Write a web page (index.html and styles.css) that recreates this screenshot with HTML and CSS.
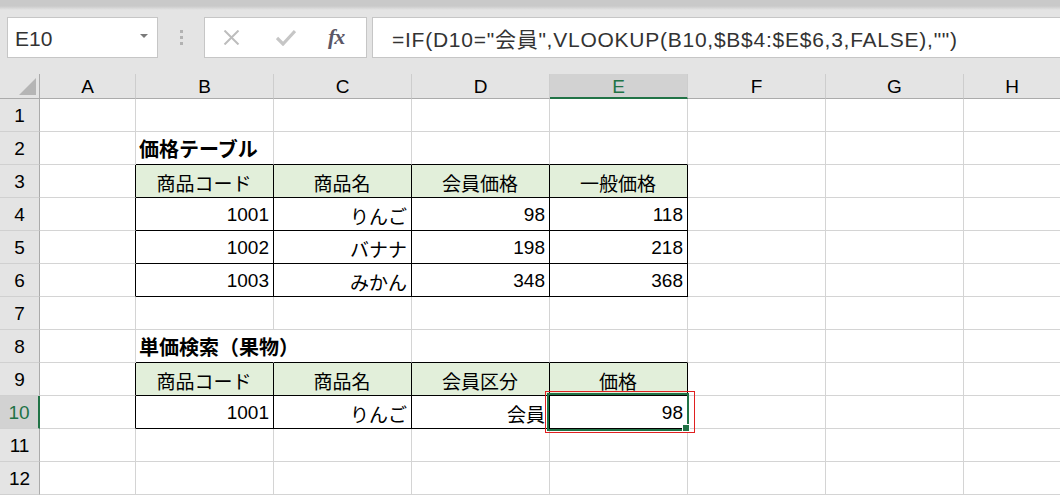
FILE: index.html
```html
<!DOCTYPE html>
<html lang="ja">
<head>
<meta charset="utf-8">
<title>Excel</title>
<link rel="stylesheet" href="styles.css">
</head>
<body>
<div class="toolbar">
  <div class="namebox"><span>E10</span><span class="caret"></span></div>
  <div class="grip"><i></i><i></i><i></i></div>
  <div class="fbtns">
    <svg class="ic-x" width="17" height="15" viewBox="0 0 17 15"><path d="M1.5 0.5 L15.5 14.5 M15.5 0.5 L1.5 14.5" stroke="#bdbdbd" stroke-width="2" fill="none"/></svg>
    <svg class="ic-ok" width="20" height="17" viewBox="0 0 20 17"><path d="M1 9 L7 15 L19 2" stroke="#c6c6c6" stroke-width="3.2" fill="none"/></svg>
    <span class="fx">fx</span>
  </div>
  <div class="fbox">=IF(D10="会員",VLOOKUP(B10,$B$4:$E$6,3,FALSE),"")</div>
</div>
<div class="sheet">
  <div class="corner"><span class="tri"></span></div>
  <div class="ch">A</div><div class="ch">B</div><div class="ch">C</div><div class="ch">D</div><div class="ch sel">E</div><div class="ch">F</div><div class="ch">G</div><div class="ch">H</div>

  <div class="rh">1</div>
  <div class="c"></div><div class="c"></div><div class="c"></div><div class="c"></div><div class="c"></div><div class="c"></div><div class="c"></div><div class="c"></div>

  <div class="rh">2</div>
  <div class="c"></div><div class="c bb title">価格テーブル</div><div class="c bb"></div><div class="c bb"></div><div class="c bb"></div><div class="c"></div><div class="c"></div><div class="c"></div>

  <div class="rh">3</div>
  <div class="c br"></div><div class="c th">商品コード</div><div class="c th">商品名</div><div class="c th">会員価格</div><div class="c th">一般価格</div><div class="c"></div><div class="c"></div><div class="c"></div>

  <div class="rh">4</div>
  <div class="c br"></div><div class="c td">1001</div><div class="c td">りんご</div><div class="c td">98</div><div class="c td">118</div><div class="c"></div><div class="c"></div><div class="c"></div>

  <div class="rh">5</div>
  <div class="c br"></div><div class="c td">1002</div><div class="c td">バナナ</div><div class="c td">198</div><div class="c td">218</div><div class="c"></div><div class="c"></div><div class="c"></div>

  <div class="rh">6</div>
  <div class="c br"></div><div class="c td">1003</div><div class="c td">みかん</div><div class="c td">348</div><div class="c td">368</div><div class="c"></div><div class="c"></div><div class="c"></div>

  <div class="rh">7</div>
  <div class="c"></div><div class="c"></div><div class="c"></div><div class="c"></div><div class="c"></div><div class="c"></div><div class="c"></div><div class="c"></div>

  <div class="rh">8</div>
  <div class="c"></div><div class="c bb nbr title">単価検索（果物）</div><div class="c bb"></div><div class="c bb"></div><div class="c bb"></div><div class="c"></div><div class="c"></div><div class="c"></div>

  <div class="rh">9</div>
  <div class="c br"></div><div class="c th">商品コード</div><div class="c th">商品名</div><div class="c th">会員区分</div><div class="c th">価格</div><div class="c"></div><div class="c"></div><div class="c"></div>

  <div class="rh sel">10</div>
  <div class="c br"></div><div class="c td">1001</div><div class="c td">りんご</div><div class="c td">会員</div><div class="c td active">98<span class="selbox"></span><span class="handle"></span><span class="mark"></span></div><div class="c"></div><div class="c"></div><div class="c"></div>

  <div class="rh">11</div>
  <div class="c"></div><div class="c"></div><div class="c"></div><div class="c"></div><div class="c"></div><div class="c"></div><div class="c"></div><div class="c"></div>

  <div class="rh">12</div>
  <div class="c"></div><div class="c"></div><div class="c"></div><div class="c"></div><div class="c"></div><div class="c"></div><div class="c"></div><div class="c"></div>
</div>
</body>
</html>
```

FILE: styles.css
```css
* { box-sizing: border-box; margin: 0; padding: 0; }
html, body { width: 1060px; height: 495px; overflow: hidden; }
body {
  background: #e4e4e4;
  font-family: "Liberation Sans", "Noto Sans CJK JP", sans-serif;
  color: #000;
}

/* ---------- toolbar ---------- */
.toolbar {
  height: 74px;
  display: flex;
  align-items: flex-start;
  padding: 17px 0 0 7px;
  background: linear-gradient(#c9c9c9 0, #c9c9c9 6px, #e4e4e4 10px);
}
.namebox {
  width: 151px;
  height: 41px;
  flex: none;
  background: #fff;
  border: 1px solid #c6c6c6;
  display: flex;
  align-items: center;
  justify-content: space-between;
  padding: 2px 9px 0 7px;
  font-size: 21px;
  color: #333;
}
.caret {
  width: 0;
  height: 0;
  border-left: 4px solid transparent;
  border-right: 4px solid transparent;
  border-top: 4px solid #7a7a7a;
  margin-bottom: 5px;
}
.grip {
  width: 46px;
  height: 41px;
  flex: none;
  display: flex;
  flex-direction: column;
  align-items: center;
  justify-content: center;
  gap: 3px;
}
.grip i { display: block; width: 3px; height: 3px; background: #b2b2b2; }
.fbtns {
  width: 163px;
  height: 41px;
  flex: none;
  background: #fff;
  border: 1px solid #c6c6c6;
  display: flex;
  align-items: center;
}
.ic-x { margin-left: 18px; }
.ic-ok { margin-left: 36px; margin-top: -1px; }
.fx {
  margin-left: 32px;
  font-family: "Liberation Serif", serif;
  font-style: italic;
  font-weight: bold;
  font-size: 22px;
  letter-spacing: -1px;
  color: #5c5767;
  margin-top: -2px;
}
.fbox {
  flex: 1;
  height: 41px;
  margin-left: 5px;
  margin-right: -4px;
  background: #fff;
  border: 1px solid #c6c6c6;
  display: flex;
  align-items: center;
  padding: 1px 0 0 19px;
  font-size: 21px;
  letter-spacing: 0.75px;
  color: #333;
  white-space: nowrap;
}

/* ---------- sheet ---------- */
.sheet {
  display: grid;
  grid-template-columns: 40px 96px repeat(6, 138px) 97px;
  grid-template-rows: 25px repeat(12, 33px);
  background: #fff;
}
.corner {
  background: #e4e4e4;
  border-right: 1px solid #ababab;
  border-bottom: 1px solid #ababab;
  display: flex;
  align-items: flex-end;
  justify-content: flex-end;
  padding: 0 3px 3px 0;
}
.tri {
  width: 0;
  height: 0;
  border-left: 17px solid transparent;
  border-bottom: 17px solid #b5b5b5;
}
.ch {
  background: #e4e4e4;
  border-right: 1px solid #cdcdcd;
  border-bottom: 1px solid #ababab;
  display: flex;
  align-items: center;
  justify-content: center;
  padding-top: 2px;
  font-size: 19px;
}
.ch.sel {
  background: #d2d2d2;
  color: #217346;
  border-bottom: 2px solid #217346;
}
.rh {
  background: #e4e4e4;
  border-right: 1px solid #ababab;
  border-bottom: 1px solid #d0d0d0;
  display: flex;
  align-items: center;
  justify-content: center;
  padding-top: 2px;
  font-size: 19px;
}
.rh.sel {
  background: #d2d2d2;
  color: #217346;
  border-right: 2px solid #217346;
}
.c {
  border-right: 1px solid #d4d4d4;
  border-bottom: 1px solid #d4d4d4;
  display: flex;
  align-items: center;
  padding: 2px 4px 0 3px;
  font-size: 19px;
  white-space: nowrap;
  min-width: 0;
}
.c.bb { border-bottom-color: #000; }
.c.br { border-right-color: #000; }
.c.nbr { border-right-color: transparent; }
.c.th {
  background: #e2efda;
  border-right-color: #000;
  border-bottom-color: #000;
  justify-content: center;
}
.c.td {
  border-right-color: #000;
  border-bottom-color: #000;
  justify-content: flex-end;
}
.title {
  font-family: "Noto Sans CJK JP", sans-serif;
  font-weight: bold;
  font-size: 20px;
  padding-left: 3px;
  padding-top: 0;
}
.active { position: relative; }
.selbox {
  position: absolute;
  left: -3px;
  top: -3px;
  width: 142px;
  height: 38px;
  border: 2px solid #217346;
}
.handle {
  position: absolute;
  left: 132px;
  top: 28px;
  width: 8px;
  height: 8px;
  background: #217346;
  border: 1px solid #fff;
}
.mark {
  position: absolute;
  left: -5px;
  top: -5px;
  width: 150px;
  height: 42px;
  border: 1px solid #e02020;
}
```
